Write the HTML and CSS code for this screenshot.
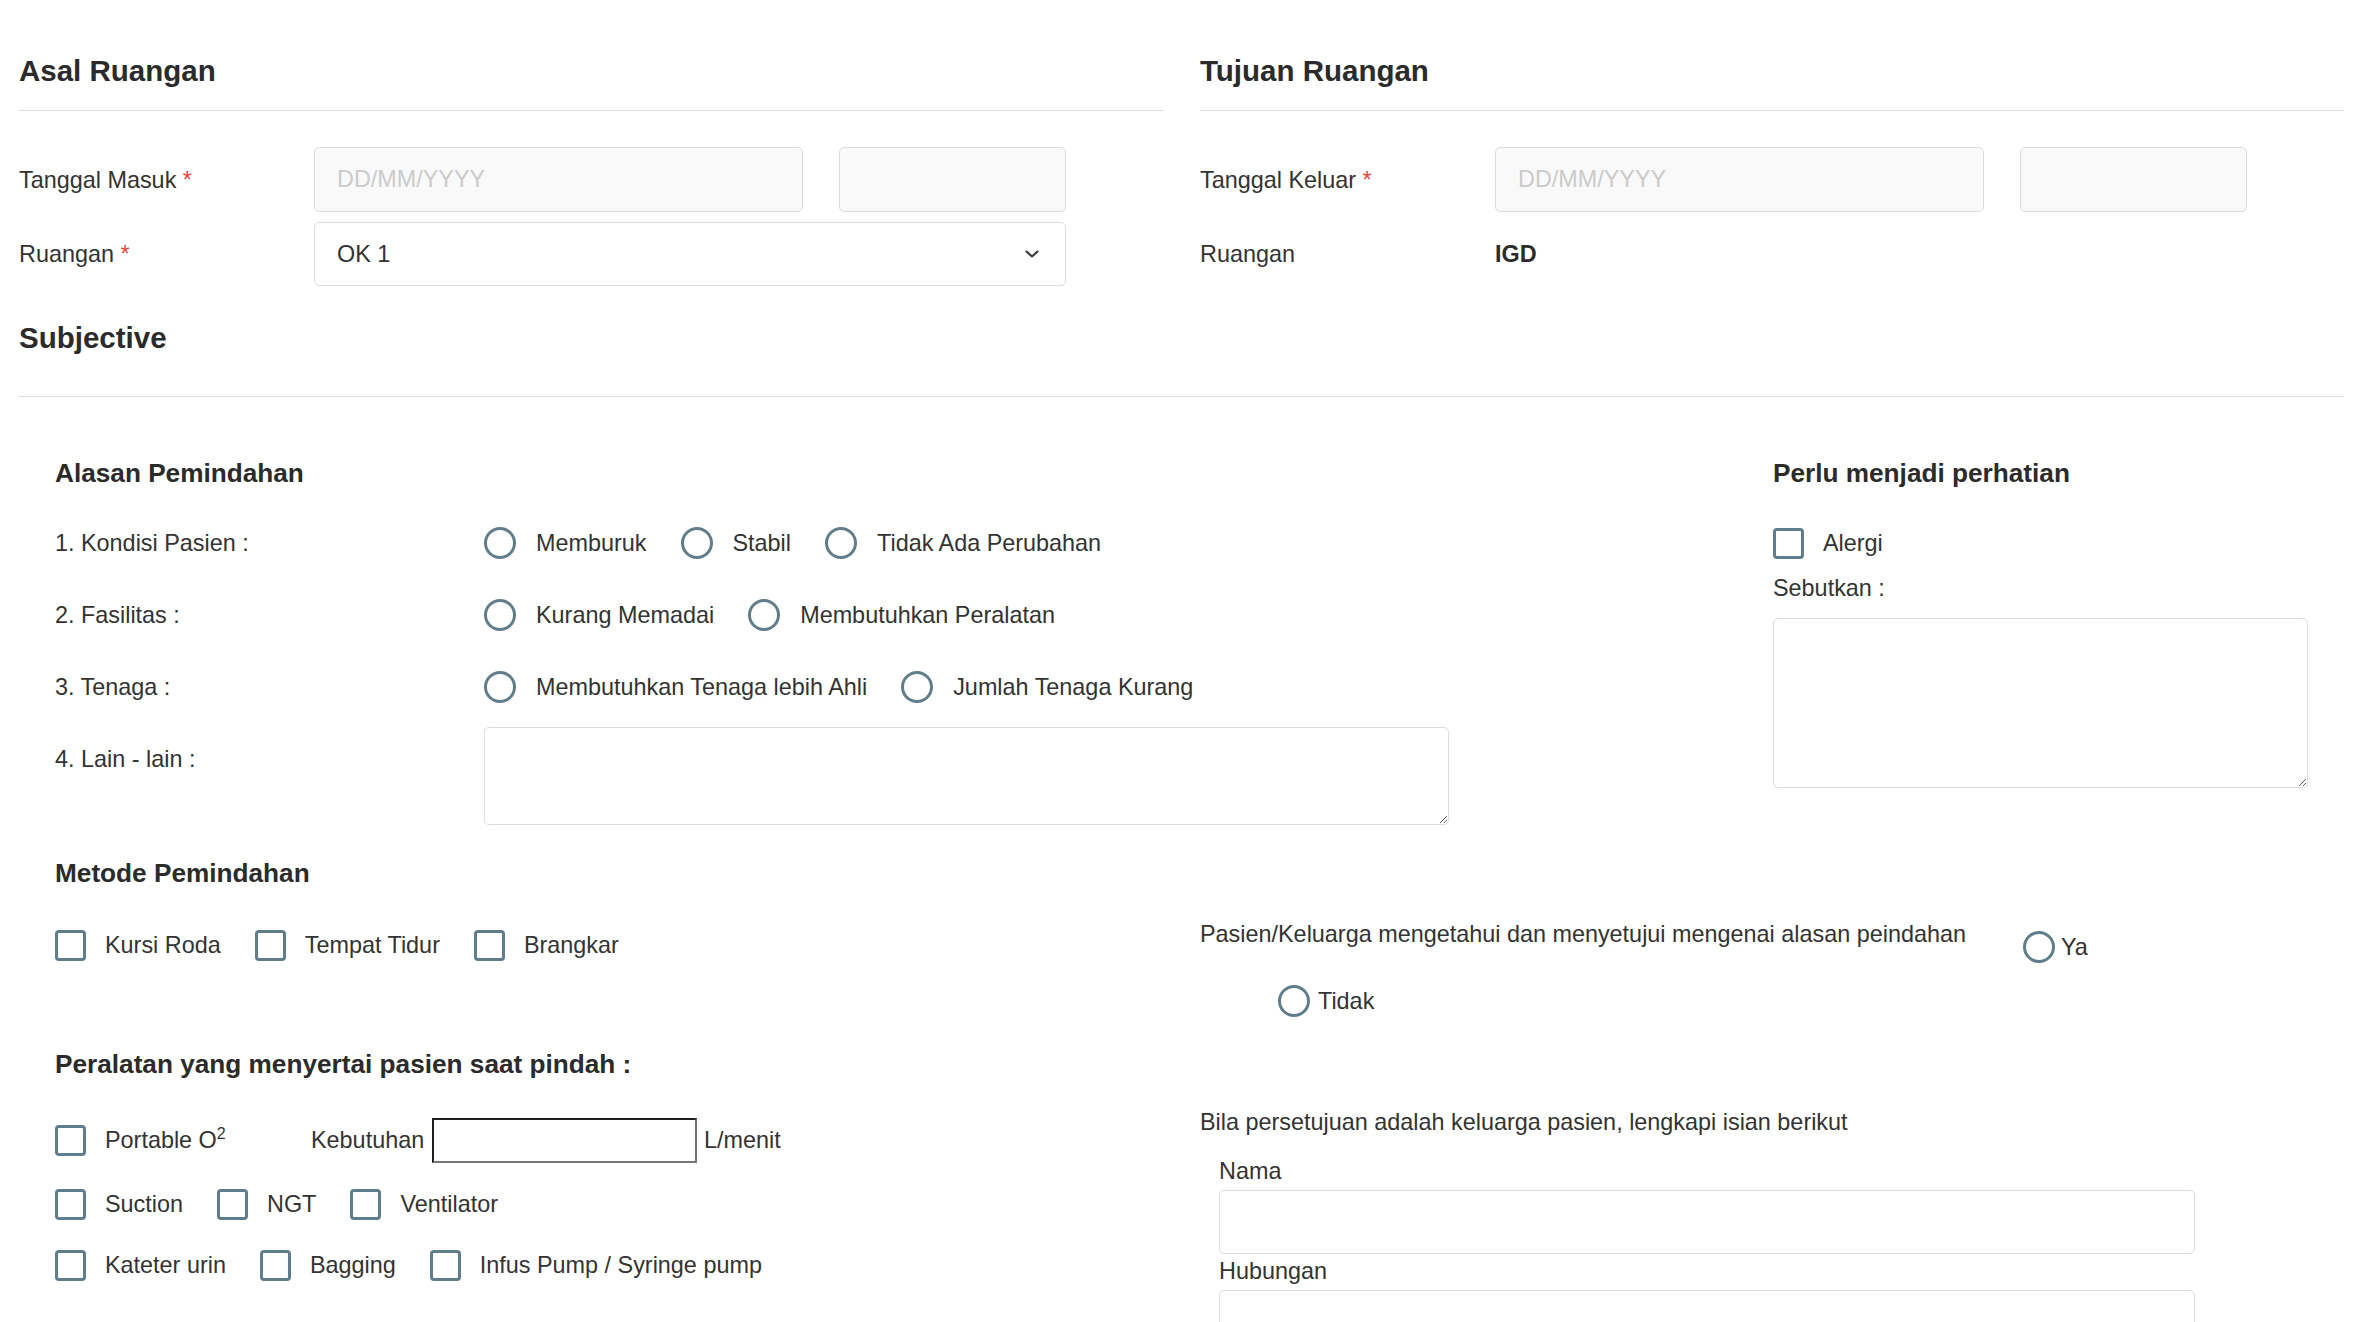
FILE: index.html
```html
<!DOCTYPE html>
<html lang="id">
<head>
<meta charset="utf-8">
<title>Transfer Pasien</title>
<link rel="stylesheet" href="styles.css">
</head>
<body>
<div class="page">
  <div class="top">
    <section class="col">
      <h2 class="sec-title">Asal Ruangan</h2>
      <hr class="rule">
      <div class="form-row first">
        <label class="flabel">Tanggal Masuk <span class="req">*</span></label>
        <div class="dt">
          <input class="inp date" placeholder="DD/MM/YYYY" readonly>
          <input class="inp time" readonly>
        </div>
      </div>
      <div class="form-row second">
        <label class="flabel">Ruangan <span class="req">*</span></label>
        <div class="select">
          <span>OK 1</span>
          <svg class="chev" width="14" height="8" viewBox="0 0 14 8"><path d="M1.5 1.5 L7 6.5 L12.5 1.5" fill="none" stroke="#333" stroke-width="2" stroke-linecap="round" stroke-linejoin="round"/></svg>
        </div>
      </div>
    </section>
    <section class="col">
      <h2 class="sec-title">Tujuan Ruangan</h2>
      <hr class="rule">
      <div class="form-row first">
        <label class="flabel">Tanggal Keluar <span class="req">*</span></label>
        <div class="dt">
          <input class="inp date" placeholder="DD/MM/YYYY" readonly>
          <input class="inp time" readonly>
        </div>
      </div>
      <div class="form-row second">
        <label class="flabel">Ruangan</label>
        <div class="value">IGD</div>
      </div>
    </section>
  </div>

  <h2 class="sec-title subj">Subjective</h2>
  <hr class="rule full">

  <div class="inner">
    <div class="alasan">
      <div class="alasan-left">
        <h3 class="sub-title">Alasan Pemindahan</h3>
        <div class="q-rows">
          <div class="q-row">
            <div class="q-label">1. Kondisi Pasien :</div>
            <div class="opts">
              <label class="opt"><input type="radio" class="radio" name="kondisi"><span>Memburuk</span></label>
              <label class="opt"><input type="radio" class="radio" name="kondisi"><span>Stabil</span></label>
              <label class="opt"><input type="radio" class="radio" name="kondisi"><span>Tidak Ada Perubahan</span></label>
            </div>
          </div>
          <div class="q-row">
            <div class="q-label">2. Fasilitas :</div>
            <div class="opts">
              <label class="opt"><input type="radio" class="radio" name="fasilitas"><span>Kurang Memadai</span></label>
              <label class="opt"><input type="radio" class="radio" name="fasilitas"><span>Membutuhkan Peralatan</span></label>
            </div>
          </div>
          <div class="q-row">
            <div class="q-label">3. Tenaga :</div>
            <div class="opts">
              <label class="opt"><input type="radio" class="radio" name="tenaga"><span>Membutuhkan Tenaga lebih Ahli</span></label>
              <label class="opt"><input type="radio" class="radio" name="tenaga"><span>Jumlah Tenaga Kurang</span></label>
            </div>
          </div>
        </div>
        <div class="q-row other">
          <div class="q-label">4. Lain - lain :</div>
          <textarea class="ta lain"></textarea>
        </div>
      </div>
      <div class="alasan-right">
        <h3 class="sub-title">Perlu menjadi perhatian</h3>
        <label class="cbopt alergi"><input type="checkbox" class="cb"><span>Alergi</span></label>
        <div class="sebut">Sebutkan :</div>
        <textarea class="ta sebut-ta"></textarea>
      </div>
    </div>

    <div class="bottom">
      <div class="bottom-left">
        <h3 class="sub-title">Metode Pemindahan</h3>
        <div class="cb-row m-row">
          <label class="cbopt"><input type="checkbox" class="cb"><span>Kursi Roda</span></label>
          <label class="cbopt"><input type="checkbox" class="cb"><span>Tempat Tidur</span></label>
          <label class="cbopt"><input type="checkbox" class="cb"><span>Brangkar</span></label>
        </div>
        <h3 class="sub-title peralatan">Peralatan yang menyertai pasien saat pindah :</h3>
        <div class="cb-row eq1">
          <label class="cbopt portable"><input type="checkbox" class="cb"><span>Portable O<sup>2</sup></span></label>
          <span class="keb">Kebutuhan</span>
          <input class="kebinp" type="text">
          <span class="lmenit">L/menit</span>
        </div>
        <div class="cb-row eq2">
          <label class="cbopt"><input type="checkbox" class="cb"><span>Suction</span></label>
          <label class="cbopt"><input type="checkbox" class="cb"><span>NGT</span></label>
          <label class="cbopt"><input type="checkbox" class="cb"><span>Ventilator</span></label>
        </div>
        <div class="cb-row eq3">
          <label class="cbopt"><input type="checkbox" class="cb"><span>Kateter urin</span></label>
          <label class="cbopt"><input type="checkbox" class="cb"><span>Bagging</span></label>
          <label class="cbopt"><input type="checkbox" class="cb"><span>Infus Pump / Syringe pump</span></label>
        </div>
      </div>
      <div class="bottom-right">
        <div class="consent">
          <span class="consent-text">Pasien/Keluarga mengetahui dan menyetujui mengenai alasan peindahan</span>
          <label class="yn ya"><input type="radio" class="radio" name="setuju"><span>Ya</span></label>
        </div>
        <label class="yn tidak"><input type="radio" class="radio" name="setuju"><span>Tidak</span></label>
        <div class="bila">Bila persetujuan adalah keluarga pasien, lengkapi isian berikut</div>
        <div class="fam-label nama-label">Nama</div>
        <input class="fam-inp" type="text">
        <div class="fam-label hub-label">Hubungan</div>
        <input class="fam-inp" type="text">
      </div>
    </div>
  </div>
</div>
</body>
</html>
```

FILE: styles.css
```css
* { box-sizing: border-box; }
html, body { margin: 0; padding: 0; background: #fff; }
body {
  font-family: "Liberation Sans", Arial, Helvetica, sans-serif;
  font-size: 23.4px;
  line-height: 32px;
  color: #333;
  overflow: hidden;
}
.page { padding: 0 26px 0 19px; }

.top {
  display: grid;
  grid-template-columns: 1145px 1144px;
  column-gap: 36px;
}
.sec-title {
  font-size: 29.5px;
  font-weight: 700;
  line-height: 36px;
  margin: 53px 0 0;
  color: #2b2b2b;
}
.rule {
  border: 0;
  border-top: 1px solid #ddd;
  height: 0;
  margin: 21px 0 0;
}
.form-row {
  display: grid;
  grid-template-columns: 295px 1fr;
  align-items: center;
}
.form-row.first { margin-top: 36px; height: 65px; }
.form-row.second { margin-top: 10px; height: 64px; }
.flabel { font-weight: 400; }
.req { color: #e5483b; }
.dt { display: flex; gap: 36px; height: 65px; }
.inp {
  height: 65px;
  border: 1px solid #dcdcdc;
  border-radius: 5px;
  background: #f9f9f9;
  font: inherit;
  color: #333;
  padding: 0 22px;
  margin: 0;
  outline: none;
}
.inp.date { width: 489px; }
.inp.time { width: 227px; }
.inp::placeholder { color: #cbcbcb; }
.select {
  width: 752px;
  height: 64px;
  border: 1px solid #dcdcdc;
  border-radius: 5px;
  background: #fff;
  display: flex;
  align-items: center;
  justify-content: space-between;
  padding: 0 26px 0 22px;
}
.chev { display: block; }
.value { font-weight: 700; color: #2b2b2b; }

.sec-title.subj { margin-top: 34px; }
.rule.full { margin-top: 40px; }

.inner { padding: 0 36px; }
.alasan {
  display: grid;
  grid-template-columns: 1fr 535px;
  margin-top: 60px;
}
.sub-title {
  font-size: 26.2px;
  font-weight: 700;
  line-height: 32px;
  margin: 0;
  color: #2b2b2b;
}
.q-rows {
  margin-top: 30px;
  display: flex;
  flex-direction: column;
  gap: 24px;
}
.q-row {
  display: grid;
  grid-template-columns: 429px 965px;
  align-items: center;
  height: 48px;
}
.q-row.other {
  margin-top: 16px;
  height: auto;
  align-items: start;
}
.q-row.other .q-label { padding-top: 16px; }
.opts { display: flex; align-items: center; gap: 34px; }
.opt { display: flex; align-items: center; gap: 20px; }

.radio {
  appearance: none;
  -webkit-appearance: none;
  width: 32px;
  height: 32px;
  border: 3px solid #607d8b;
  border-radius: 50%;
  margin: 0;
  background: #fff;
  flex: none;
}
.cb {
  appearance: none;
  -webkit-appearance: none;
  width: 31px;
  height: 31px;
  border: 3px solid #607d8b;
  border-radius: 4px;
  margin: 0;
  background: #fff;
  flex: none;
}
.ta {
  display: block;
  border: 1px solid #dcdcdc;
  border-radius: 5px;
  background: #fff;
  margin: 0;
  font: inherit;
  outline: none;
}
.ta.lain { width: 965px; height: 98px; }

.cbopt { display: flex; align-items: center; gap: 19px; }
.alergi { margin-top: 30px; height: 48px; }
.sebut { margin-top: 5px; }
.ta.sebut-ta { width: 535px; height: 170px; margin-top: 14px; }

.bottom {
  display: grid;
  grid-template-columns: 1145px 1fr;
  margin-top: 32px;
}
.cb-row { display: flex; align-items: center; height: 48px; gap: 34px; }
.m-row { margin-top: 32px; }
.sub-title.peralatan { margin-top: 79px; }
.eq1 { margin-top: 36px; gap: 0; }
.eq2 { margin-top: 16px; }
.eq3 { margin-top: 13px; }
.portable { width: 256px; }
.portable sup { font-size: 16px; line-height: 0; vertical-align: 9px; }
.keb { width: 121px; }
.kebinp {
  width: 265px;
  height: 45px;
  border: 2px solid;
  border-color: #1e1e1e #767676 #767676 #1e1e1e;
  background: #fff;
  margin: 0;
  padding: 0 4px;
  font: inherit;
  outline: none;
}
.lmenit { margin-left: 7px; }

.consent { display: flex; align-items: flex-start; margin-top: 61px; }
.consent-text { white-space: nowrap; }
.yn { display: flex; align-items: center; }
.yn.ya { margin: 13px 0 0 57px; gap: 6px; }
.yn.tidak { margin: 22px 0 0 78px; gap: 8px; width: max-content; }
.bila { margin-top: 89px; }
.fam-label { margin-left: 19px; }
.nama-label { margin-top: 17px; }
.hub-label { margin-top: 1px; }
.fam-inp {
  display: block;
  width: 976px;
  height: 64px;
  margin: 3px 0 0 19px;
  border: 1px solid #dcdcdc;
  border-radius: 5px;
  background: #fff;
  font: inherit;
  outline: none;
}
```
